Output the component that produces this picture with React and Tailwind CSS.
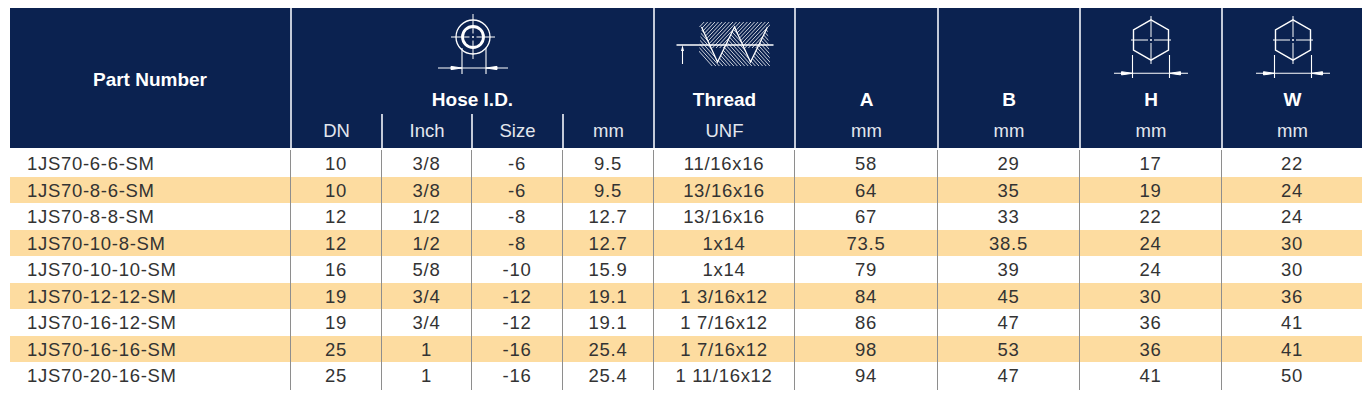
import React from 'react'

const rows = [
  ['1JS70-6-6-SM', '10', '3/8', '-6', '9.5', '11/16x16', '58', '29', '17', '22'],
  ['1JS70-8-6-SM', '10', '3/8', '-6', '9.5', '13/16x16', '64', '35', '19', '24'],
  ['1JS70-8-8-SM', '12', '1/2', '-8', '12.7', '13/16x16', '67', '33', '22', '24'],
  ['1JS70-10-8-SM', '12', '1/2', '-8', '12.7', '1x14', '73.5', '38.5', '24', '30'],
  ['1JS70-10-10-SM', '16', '5/8', '-10', '15.9', '1x14', '79', '39', '24', '30'],
  ['1JS70-12-12-SM', '19', '3/4', '-12', '19.1', '1 3/16x12', '84', '45', '30', '36'],
  ['1JS70-16-12-SM', '19', '3/4', '-12', '19.1', '1 7/16x12', '86', '47', '36', '41'],
  ['1JS70-16-16-SM', '25', '1', '-16', '25.4', '1 7/16x12', '98', '53', '36', '41'],
  ['1JS70-20-16-SM', '25', '1', '-16', '25.4', '1 11/16x12', '94', '47', '41', '50'],
]

const cols = 'grid grid-cols-[280px_91px_90px_91px_91px_141px_143px_142px_142px_141px]'

// dimension arrow head, tip at x,y pointing towards dir (+1 right, -1 left)
function Head({ x, y, dir }) {
  const b = x - dir * 11
  return <polygon points={`${x},${y} ${b},${y - 1.6} ${b},${y + 1.6}`} fill="#fff" />
}

function HoseIcon() {
  return (
    <svg width="80" height="80" viewBox="0 0 80 80" fill="none" stroke="#fff">
      <circle cx="40" cy="29" r="17" strokeWidth="1.3" />
      <circle cx="40" cy="29" r="10.5" strokeWidth="2.8" />
      <g strokeWidth="1">
        <path d="M18 29H36.5M43.5 29H62M40 6V25.5M40 32.5V51" />
        <path d="M39 29H41" strokeWidth="1.4" />
        <path d="M29 40V66M53 40V66M5 60H75" strokeWidth="1.1" />
      </g>
      <Head x={29} y={60} dir={1} />
      <Head x={53} y={60} dir={-1} />
    </svg>
  )
}

function ThreadIcon() {
  const top = []
  const bot = []
  for (let i = 0; i < 28; i++) {
    const x = 10 + i * 3.6
    top.push(`M${x} 40L${x + 26} 12`)
    bot.push(`M${x} 22L${x + 34} 60`)
  }
  return (
    <svg width="110" height="80" viewBox="0 0 110 80" fill="none" stroke="#fff">
      <defs>
        <clipPath id="thr-top">
          <polygon points="28,14 100,14 100,19 97.5,19 80.5,54 64.5,19 47.5,54 31.5,19 28,19" />
        </clipPath>
        <clipPath id="thr-bot">
          <polygon points="28,58 100,58 100,54 97.5,19 80.5,54 64.5,19 47.5,54 31.5,19 28,54" />
        </clipPath>
      </defs>
      <path d={top.join('')} strokeWidth="0.8" clipPath="url(#thr-top)" />
      <path d={bot.join('')} strokeWidth="0.8" clipPath="url(#thr-bot)" />
      <path d="M31.5 19L47.5 54L64.5 19L80.5 54L97.5 19" strokeWidth="1.3" />
      <path d="M6.5 37H103.5" strokeWidth="1.4" />
      <path d="M12.5 41V56" strokeWidth="1.1" />
      <polygon points="12.5,37 11,43 14,43" fill="#fff" stroke="none" />
    </svg>
  )
}

function HexIcon() {
  return (
    <svg width="90" height="80" viewBox="0 0 90 80" fill="none" stroke="#fff">
      <polygon points="45,11.8 62.5,21.9 62.5,42.1 45,52.2 27.5,42.1 27.5,21.9" strokeWidth="1.4" />
      <path d="M25 32H42M48 32H65M45 8V29M45 35V56" strokeWidth="1" />
      <path d="M44 32H46" strokeWidth="1.4" />
      <path d="M26.5 47V70M63.5 47V70M8 65.3H82" strokeWidth="1.1" />
      <Head x={26.5} y={65.3} dir={1} />
      <Head x={63.5} y={65.3} dir={-1} />
    </svg>
  )
}

function TopCell({ icon, label, span }) {
  return (
    <div className={`${span || ''} border-l-2 border-[#c3cad8] flex flex-col items-center pb-[4px]`}>
      <div className="h-[80px] flex justify-center">{icon}</div>
      <div className="mt-[2px] leading-[20px] text-[19px] font-bold text-white">{label}</div>
    </div>
  )
}

export default function App() {
  return (
    <div className="pt-[8px] pl-[10px] bg-white min-h-[403px]" style={{ fontFamily: '"Liberation Sans", Arial, sans-serif' }}>
      <div className="w-[1352px]">
        {/* header */}
        <div className={`${cols} grid-rows-[106px_34px] bg-[#0b2250]`}>
          <div className="row-span-2 flex items-center justify-center pt-[4px] text-[19px] font-bold text-white">
            Part Number
          </div>
          <TopCell span="col-span-4" icon={<HoseIcon />} label="Hose I.D." />
          <TopCell icon={<ThreadIcon />} label="Thread" />
          <TopCell icon={null} label="A" />
          <TopCell icon={null} label="B" />
          <TopCell icon={<HexIcon />} label="H" />
          <TopCell icon={<HexIcon />} label="W" />
          {['DN', 'Inch', 'Size', 'mm', 'UNF', 'mm', 'mm', 'mm', 'mm'].map((t, i) => (
            <div key={i} className="border-l-2 border-[#c3cad8] flex items-center justify-center text-[18.5px] text-[#e3e7ee]">
              {t}
            </div>
          ))}
        </div>

        {/* body */}
        {rows.map((r, i) => (
          <div key={r[0]} className={`${cols} ${i % 2 ? 'bg-[#fddca0]' : 'bg-white'} ${i === 0 ? 'h-[28.5px] pt-[2px]' : 'h-[26.5px]'} text-[18.5px] text-[#333] tracking-[0.7px]`}>
            {r.map((c, j) => (
              <div key={j} className={j === 0 ? 'flex items-center pl-[17px]' : 'flex items-center justify-center border-l border-[#8e8e8e]'}>
                {c}
              </div>
            ))}
          </div>
        ))}
      </div>
    </div>
  )
}
